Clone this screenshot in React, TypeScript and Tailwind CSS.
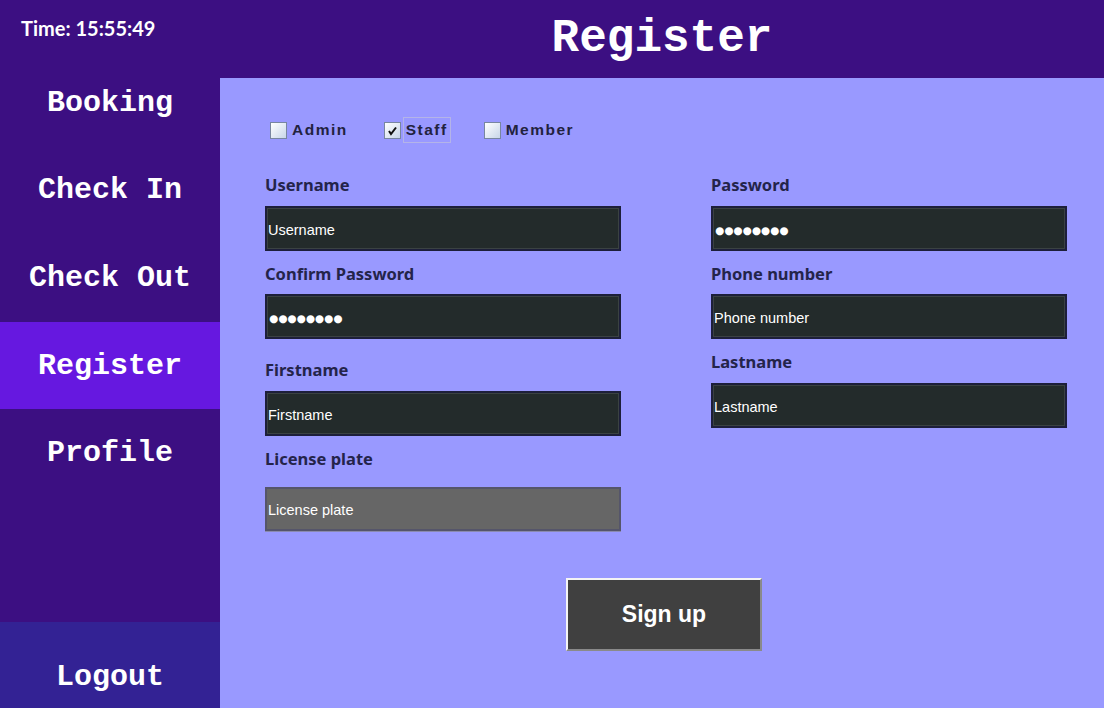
import React from "react";

const navFont = { fontFamily: '"Courier New", "Nimbus Mono PS", "FreeMono", "Liberation Mono", monospace' };

function NavItem({ label, cls }: { label: string; cls: string }) {
  return (
    <div className={cls} style={navFont}>
      <span className="text-[30px] font-bold text-white leading-none">{label}</span>
    </div>
  );
}

function Field({
  label,
  value,
  labelCls,
  inputCls,
  password,
  disabled,
}: {
  label: string;
  value: string;
  labelCls: string;
  inputCls: string;
  password?: boolean;
  disabled?: boolean;
}) {
  return (
    <div className="flex flex-col">
      <div
        className={labelCls + " h-[20px] flex items-center text-[16.5px] font-bold text-[#24244a] leading-none"}
        style={{ fontFamily: '"Noto Sans", "Open Sans", sans-serif' }}
      >
        {label}
      </div>
      <div
        className={
          inputCls +
          (disabled
            ? " bg-[#666666] border-2 border-[#55556a] shadow-[0_1px_0_#8a8ab0]"
            : " bg-[#232b2b] border-2 border-[#1d1f3a] shadow-[inset_0_0_0_1px_#3a4242]") +
          " w-[356px] flex items-center pl-[1px] pt-[3px]"
        }
      >
        {password ? (
          <span className="text-white text-[10.5px] leading-none pl-[1px]" style={{ fontFamily: '"DejaVu Sans", sans-serif' }}>
            ●●●●●●●●
          </span>
        ) : (
          <span
            className="text-white text-[14.5px] leading-none"
            style={{ fontFamily: '"Liberation Sans", Arial, sans-serif' }}
          >
            {value}
          </span>
        )}
      </div>
    </div>
  );
}

function Checkbox({ label, checked, focused }: { label: string; checked?: boolean; focused?: boolean }) {
  return (
    <div className="flex items-center">
      <div className="w-[17px] h-[17px] border border-[#7886a0] bg-gradient-to-br from-white to-[#c8d6e8] flex items-center justify-center">
        {checked && (
          <svg width="11" height="11" viewBox="0 0 11 11">
            <path d="M2 6 L4 9 L9 2.5" stroke="#111" strokeWidth="2" fill="none" />
          </svg>
        )}
      </div>
      <div
        className={
          (focused ? "border border-[#b4b4e8] " : "border border-transparent ") +
          "ml-[2px] px-[2px] h-[26px] flex items-center text-[15.5px] font-bold text-[#22223e] tracking-[1.5px]"
        }
        style={{ fontFamily: '"Liberation Sans", Arial, sans-serif' }}
      >
        {label}
      </div>
    </div>
  );
}

export default function App() {
  return (
    <div className="w-[1104px] h-[708px] flex flex-col overflow-hidden bg-[#3c0f82]">
      {/* Header */}
      <div className="h-[78px] flex items-start bg-[#3c0f82] shrink-0">
        <div className="w-[220px] pl-[21px] pt-[18px]">
          <span
            className="text-white text-[20px] font-bold leading-none"
            style={{ fontFamily: 'Lato, "Noto Sans", sans-serif' }}
          >
            Time: 15:55:49
          </span>
        </div>
        <div className="flex-1 flex justify-center pt-[16px]">
          <span className="text-white text-[46px] font-bold leading-none" style={navFont}>
            Register
          </span>
        </div>
      </div>
      <div className="flex flex-1">
        {/* Sidebar */}
        <div className="w-[220px] flex flex-col shrink-0">
          <NavItem label="Booking" cls="h-[68px] flex items-start justify-center pt-[10px]" />
          <NavItem label="Check In" cls="h-[88px] flex items-center justify-center" />
          <NavItem label="Check Out" cls="h-[88px] flex items-center justify-center" />
          <NavItem label="Register" cls="h-[87px] flex items-center justify-center bg-[#6618e0]" />
          <NavItem label="Profile" cls="h-[88px] flex items-center justify-center" />
          <div className="flex-1" />
          <NavItem label="Logout" cls="h-[86px] flex items-start justify-center pt-[40px] bg-[#332294]" />
        </div>
        {/* Content */}
        <div className="flex-1 bg-[#9999ff] pl-[45px] pt-[39px]">
          <div className="h-[26px] flex items-center pl-[5px]">
            <Checkbox label="Admin" />
            <div className="w-[33px]" />
            <Checkbox label="Staff" checked focused />
            <div className="w-[33px]" />
            <Checkbox label="Member" />
          </div>
          <div className="flex gap-[90px]">
            <div className="flex flex-col">
              <Field label="Username" value="Username" labelCls="mt-[32px]" inputCls="mt-[11px] h-[45px]" />
              <Field label="Confirm Password" value="" password labelCls="mt-[13px]" inputCls="mt-[10px] h-[45px]" />
              <Field label="Firstname" value="Firstname" labelCls="mt-[21px]" inputCls="mt-[11px] h-[45px]" />
              <Field label="License plate" value="License plate" disabled labelCls="mt-[13px]" inputCls="mt-[18px] h-[44px]" />
            </div>
            <div className="flex flex-col">
              <Field label="Password" value="" password labelCls="mt-[32px]" inputCls="mt-[11px] h-[45px]" />
              <Field label="Phone number" value="Phone number" labelCls="mt-[13px]" inputCls="mt-[10px] h-[45px]" />
              <Field label="Lastname" value="Lastname" labelCls="mt-[13px]" inputCls="mt-[11px] h-[45px]" />
            </div>
          </div>
          <div className="mt-[47px] ml-[301px]">
            <div
              className="w-[196px] h-[73px] bg-[#404040] border-2 border-t-[#f4f4f4] border-l-[#f4f4f4] border-r-[#8a8a8a] border-b-[#8a8a8a] flex items-center justify-center"
            >
              <span
                className="text-white text-[23px] font-bold leading-none"
                style={{ fontFamily: '"Liberation Sans", Arial, sans-serif' }}
              >
                Sign up
              </span>
            </div>
          </div>
        </div>
      </div>
    </div>
  );
}
